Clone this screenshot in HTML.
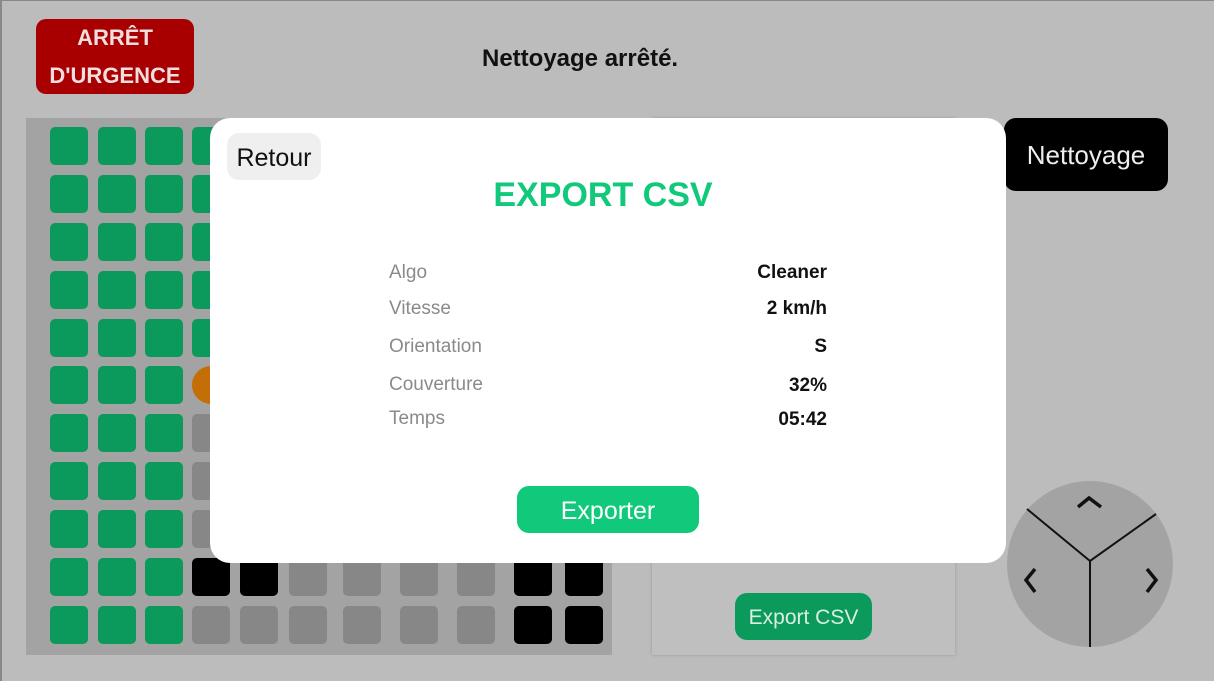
<!DOCTYPE html>
<html><head><meta charset="utf-8"><style>
*{margin:0;padding:0;box-sizing:border-box}
body{width:1214px;height:681px;background:#bcbcbc;position:relative;overflow:hidden;font-family:"Liberation Sans",sans-serif;box-shadow:inset 2px 1px 0 #888}
.a{position:absolute}
.c{position:absolute;width:38px;height:38px;border-radius:5px}
.g{background:#0c9a5c}.k{background:#000}.y{background:#878787}
.lbl{position:absolute;left:389px;color:#8a8a8a;font-size:19px}
.val{position:absolute;right:387px;color:#111;font-size:19px;font-weight:bold}
</style></head><body>
<div class="a" style="left:36px;top:19px;width:158px;height:75px;background:#a80000;border-radius:10px;color:#f2dede;font-weight:bold;font-size:22px;text-align:center;line-height:38px">ARRÊT<br>D'URGENCE</div>
<div class="a" style="left:482px;top:45px;font-size:24px;font-weight:bold;color:#111">Nettoyage arrêté.</div>
<div class="a" style="left:26px;top:118px;width:586px;height:537px;background:#a3a3a3"></div>
<div id="grid"></div>
<div class="a" style="left:652px;top:118px;width:303px;height:537px;background:#bfbfbf;box-shadow:0 0 3px rgba(0,0,0,.2)"></div>
<div class="a" style="left:735px;top:593px;width:137px;height:47px;background:#0c9a5c;border-radius:12px;color:#d8efe2;font-size:21px;text-align:center;line-height:49px">Export CSV</div>
<div class="a" style="left:1004px;top:118px;width:164px;height:73px;background:#000;border-radius:12px;color:#eee;font-size:26px;text-align:center;line-height:75px">Nettoyage</div>
<svg class="a" style="left:1006px;top:480px" width="168" height="168" viewBox="1006 480 168 168">
<circle cx="1090" cy="564" r="83" fill="#a3a3a3"/>
<path d="M1027 509L1090 561L1156 514M1090 561V647" stroke="#111" stroke-width="2" fill="none"/>
<path d="M1078 507L1089 498L1101 507M1035 569L1026 580L1035 592M1147 569L1156 580L1147 592" stroke="#111" stroke-width="3.5" fill="none"/>
</svg>
<div class="a" style="left:210px;top:118px;width:796px;height:445px;background:#fff;border-radius:20px">
<div class="a" style="left:17px;top:15px;width:94px;height:47px;background:#efefef;border-radius:12px;font-size:25px;color:#111;text-align:center;line-height:50px">Retour</div>
<div class="a" style="left:-5px;width:796px;top:58px;text-align:center;color:#10c97a;font-size:34px;font-weight:bold">EXPORT CSV</div>
<div class="a" style="left:307px;top:368px;width:182px;height:47px;background:#10c97a;border-radius:12px;color:#fff;font-size:25px;text-align:center;line-height:50px">Exporter</div>
</div>
<div class="lbl" style="top:262px">Algo</div><div class="val" style="top:262px">Cleaner</div>
<div class="lbl" style="top:298px">Vitesse</div><div class="val" style="top:298px">2 km/h</div>
<div class="lbl" style="top:336px">Orientation</div><div class="val" style="top:336px">S</div>
<div class="lbl" style="top:374px">Couverture</div><div class="val" style="top:375px">32%</div>
<div class="lbl" style="top:408px">Temps</div><div class="val" style="top:409px">05:42</div>
<script>
var xs=[50,98,145,192,240,289,343,400,457,514,565],ys=[127,175,223,271,319,366,414,462,510,558,606],h='';
for(var r=0;r<11;r++)for(var c=0;c<11;c++){
 var cl='y';
 if(c<3||(c==3&&r<5))cl='g';
 if(r>=9&&c>=9)cl='k';
 if(r==9&&(c==3||c==4))cl='k';
 if(r==5&&c==3){h+='<div class="c" style="left:'+xs[c]+'px;top:'+ys[r]+'px;background:#c46e08;border-radius:50%"></div>';continue;}
 h+='<div class="c '+cl+'" style="left:'+xs[c]+'px;top:'+ys[r]+'px"></div>';}
document.getElementById('grid').outerHTML=h;
</script>
</body></html>
